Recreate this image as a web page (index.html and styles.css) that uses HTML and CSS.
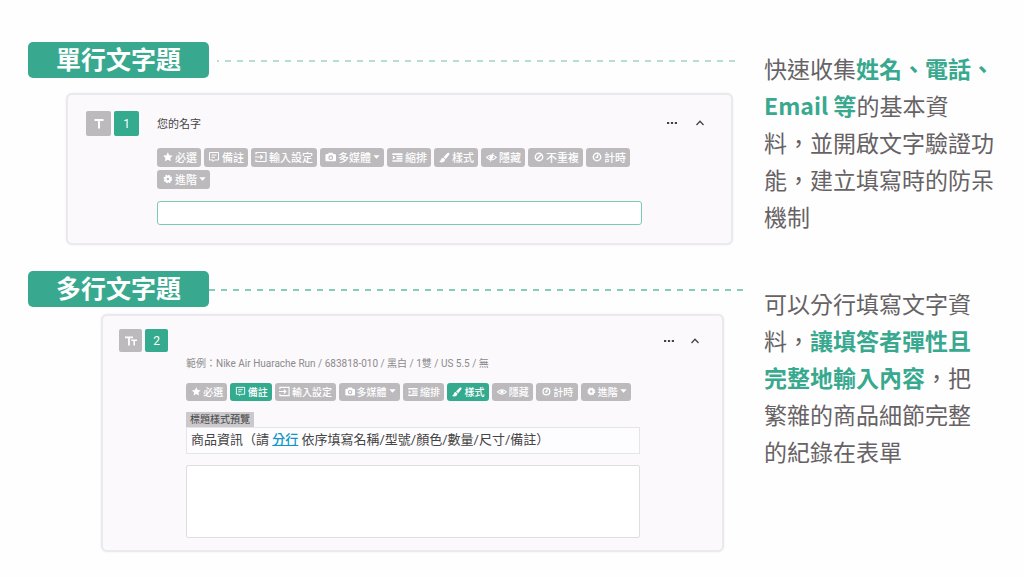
FILE: index.html
```html
<!DOCTYPE html>
<html lang="zh-Hant">
<head>
<meta charset="utf-8">
<meta name="viewport" content="width=device-width, initial-scale=1">
<title>文字題</title>
<link rel="stylesheet" href="styles.css">
</head>
<body>
<svg class="sprite" aria-hidden="true">
  <symbol id="star" viewBox="-2 -1 14 14"><path fill="currentColor" d="M6 .5l1.700 3.500 3.900.5-2.800 2.700.7 3.900L6 9.300 2.500 11.100l.7-3.900L.4 4.500l3.900-.5z"/></symbol>
  <symbol id="note" viewBox="0 0 12 12"><path fill="none" stroke="currentColor" d="M1.500 1.500h9v7.500H6.500L5 10.500V9H1.500zM3.500 4h5M3.500 6.300h3.500"/></symbol>
  <symbol id="enter" viewBox="0 0 12 12"><path fill="none" stroke="currentColor" stroke-width="1.200" d="M1 3.500V1.500h10v9H1V8.500M0 6h7.500M5.300 3.800L7.500 6 5.300 8.200"/></symbol>
  <symbol id="camera" viewBox="-1 0 12.500 12"><path fill="currentColor" fill-rule="evenodd" d="M4 1.500h4l.8 1.500H10q1.500 0 1.500 1.500v5q0 1-1 1h-9q-1 0-1-1v-5Q.5 3 2 3h1.200zM6 4.200a2.500 2.500 0 100 5 2.500 2.500 0 000-5zm0 1.200a1.300 1.300 0 110 2.600 1.300 1.300 0 010-2.600z"/></symbol>
  <symbol id="indent" viewBox="-1 -1 13 13"><path fill="currentColor" d="M.5 1.500h11v1.700H.5zM5 4.200h6.500v1.500H5zM5 6.600h6.500v1.500H5zM.5 9h11v1.700H.5zM1 4l3 2.100-3 2.100z"/></symbol>
  <symbol id="brush" viewBox="-1 -1 13 13"><path fill="currentColor" d="M10 .9q1.800-.3 1.500 1.500L7.500 7.700 5 5.600 9 1.500zM4.500 6.200l2.400 2Q6 11.500 2.500 11.400 1 11.400.3 10.500 2 10 2.300 8.200 2.800 6.300 4.500 6.200z"/></symbol>
  <symbol id="eye" viewBox="-1 -1 13 13"><path fill="none" stroke="currentColor" stroke-width="1.200" d="M.7 6Q6 .6 11.300 6 6 11.400.7 6z"/><circle cx="6" cy="5.800" r="2.100" fill="currentColor"/></symbol>
  <symbol id="eye-off" viewBox="-1 -1 13 13"><path fill="none" stroke="currentColor" stroke-width="1.200" d="M.7 6Q6 .6 11.300 6 6 11.400.7 6zM7.800 1.500L4.500 10.500"/><circle cx="5.700" cy="5.800" r="2" fill="currentColor"/></symbol>
  <symbol id="ban" viewBox="-1 0 12 12"><g fill="none" stroke="currentColor" stroke-width="1.400"><circle cx="6" cy="6" r="3.700"/><path d="M3.500 8.500l5-5"/></g></symbol>
  <symbol id="clock" viewBox="-1 0 12 12"><g fill="none" stroke="currentColor" stroke-width="1.400"><circle cx="6" cy="6" r="3.700"/><path d="M7 3.500L6.300 6.400H4.500"/></g></symbol>
  <symbol id="gear" viewBox="-2 -1 14 14"><circle cx="6" cy="6" r="2.800" fill="none" stroke="currentColor" stroke-width="2.600"/><circle cx="6" cy="6" r="4.300" fill="none" stroke="currentColor" stroke-width="1.500" stroke-dasharray="1.900 1.480"/></symbol>
  <symbol id="caret" viewBox="0 0 7 6"><path fill="currentColor" d="M.3 1.300h6.400L3.500 4.800z"/></symbol>
  <symbol id="dots" viewBox="0 0 12 12"><path fill="currentColor" d="M1 5h2.200v2H1zM4.900 5h2.200v2H4.900zM8.800 5H11v2H8.800z"/></symbol>
  <symbol id="up" viewBox="0 0 12 12"><path fill="none" stroke="currentColor" stroke-width="1.300" d="M2.500 8L6 4.300 9.500 8"/></symbol>
  <symbol id="type-one" viewBox="0 0 12 12"><path fill="currentColor" d="M1.500 1h9v2H7v7.500H5V3H1.500z"/></symbol>
  <symbol id="type-many" viewBox="0 0 12 12"><path fill="currentColor" d="M0 1.500h8v1.700H4.900V10.500H3.100V3.200H0zM6.300 4.500H12v1.500h-2v4.500H8.400V6H6.300z"/></symbol>
</svg>

<main class="page">
  <section class="topic">
    <div class="demo">
      <div class="heading heading-first">
        <h2 class="title">單行文字題</h2>
        <svg class="dashes" aria-hidden="true"><line x1="0" y1="3" x2="100%" y2="3"/></svg>
      </div>
      <article class="card card-single">
        <header class="card-head">
          <span class="badge badge-type"><svg class="type-icon"><use href="#type-one"/></svg></span>
          <span class="badge badge-number">1</span>
          <label class="question" for="answer-name">您的名字</label>
          <button class="plain" type="button" aria-label="更多"><svg class="icon"><use href="#dots"/></svg></button>
          <button class="plain" type="button" aria-label="收合"><svg class="icon"><use href="#up"/></svg></button>
        </header>
        <div class="card-body">
          <div class="toolbar">
            <button class="tool" type="button"><svg class="icon"><use href="#star"/></svg>必選</button>
            <button class="tool" type="button"><svg class="icon"><use href="#note"/></svg>備註</button>
            <button class="tool" type="button"><svg class="icon"><use href="#enter"/></svg>輸入設定</button>
            <button class="tool" type="button"><svg class="icon"><use href="#camera"/></svg>多媒體<svg class="caret"><use href="#caret"/></svg></button>
            <button class="tool" type="button"><svg class="icon"><use href="#indent"/></svg>縮排</button>
            <button class="tool" type="button"><svg class="icon"><use href="#brush"/></svg>樣式</button>
            <button class="tool" type="button"><svg class="icon"><use href="#eye-off"/></svg>隱藏</button>
            <button class="tool" type="button"><svg class="icon"><use href="#ban"/></svg>不重複</button>
            <button class="tool" type="button"><svg class="icon"><use href="#clock"/></svg>計時</button>
            <button class="tool" type="button"><svg class="icon"><use href="#gear"/></svg>進階<svg class="caret"><use href="#caret"/></svg></button>
          </div>
          <input class="answer-line" id="answer-name" type="text">
        </div>
      </article>
    </div>
    <p class="description">快速收集<strong>姓名、電話、<br>Email 等</strong>的基本資<br>料，並開啟文字驗證功<br>能，建立填寫時的防呆<br>機制</p>
  </section>

  <section class="topic">
    <div class="demo">
      <div class="heading">
        <h2 class="title">多行文字題</h2>
        <svg class="dashes" aria-hidden="true"><line x1="0" y1="3" x2="100%" y2="3"/></svg>
      </div>
      <article class="card card-multi">
        <header class="card-head">
          <span class="badge badge-type"><svg class="type-icon"><use href="#type-many"/></svg></span>
          <span class="badge badge-number">2</span>
          <span class="question"></span>
          <button class="plain" type="button" aria-label="更多"><svg class="icon"><use href="#dots"/></svg></button>
          <button class="plain" type="button" aria-label="收合"><svg class="icon"><use href="#up"/></svg></button>
        </header>
        <div class="card-body">
          <p class="example">範例：Nike Air Huarache Run / 683818-010 / 黑白 / 1雙 / US 5.5 / 無</p>
          <div class="toolbar">
            <button class="tool" type="button"><svg class="icon"><use href="#star"/></svg>必選</button>
            <button class="tool tool-active" type="button"><svg class="icon"><use href="#note"/></svg>備註</button>
            <button class="tool" type="button"><svg class="icon"><use href="#enter"/></svg>輸入設定</button>
            <button class="tool" type="button"><svg class="icon"><use href="#camera"/></svg>多媒體<svg class="caret"><use href="#caret"/></svg></button>
            <button class="tool" type="button"><svg class="icon"><use href="#indent"/></svg>縮排</button>
            <button class="tool tool-active" type="button"><svg class="icon"><use href="#brush"/></svg>樣式</button>
            <button class="tool" type="button"><svg class="icon"><use href="#eye"/></svg>隱藏</button>
            <button class="tool" type="button"><svg class="icon"><use href="#clock"/></svg>計時</button>
            <button class="tool" type="button"><svg class="icon"><use href="#gear"/></svg>進階<svg class="caret"><use href="#caret"/></svg></button>
          </div>
          <span class="preview-tag">標題樣式預覽</span>
          <label class="preview" for="answer-goods">商品資訊（請 <span class="preview-link">分行</span> 依序填寫名稱/型號/顏色/數量/尺寸/備註）</label>
          <textarea class="answer-area" id="answer-goods"></textarea>
        </div>
      </article>
    </div>
    <p class="description description-second">可以分行填寫文字資<br>料，<strong>讓填答者彈性且<br>完整地輸入內容</strong>，把<br>繁雜的商品細節完整<br>的紀錄在表單</p>
  </section>
</main>
</body>
</html>
```

FILE: styles.css
```css
* {
  box-sizing: border-box;
}

body {
  margin: 0;
  background: #fefefe;
  color: #444;
  font-family: Roboto, "Noto Sans CJK TC", sans-serif;
}

button,
input,
textarea {
  margin: 0;
  font: inherit;
}

.sprite {
  display: none;
}

.page {
  display: flex;
  flex-direction: column;
  gap: 26px;
  padding: 42px 28px 24px;
}

.topic {
  display: grid;
  grid-template-columns: minmax(0, 1fr) 232px;
  column-gap: 16px;
}

.heading {
  display: flex;
  align-items: center;
}

.heading-first {
  gap: 8px;
  padding-right: 12px;
}

.title {
  flex: none;
  width: 181px;
  margin: 0;
  padding-bottom: 4px;
  border-radius: 5px;
  background: #38a98f;
  color: #fff;
  font: 700 25px/32px "Noto Sans CJK TC", sans-serif;
  text-align: center;
}

.dashes {
  flex: 1;
  width: 0;
  height: 4px;
}

.dashes line {
  stroke: #83cdb9;
  stroke-width: 2;
  stroke-dasharray: 6 6;
}

.heading-first .dashes line {
  stroke-width: 1;
  stroke: #6fbfa9;
  stroke-dashoffset: 4;
}

.card {
  border: 2px solid #ebe9ed;
  border-radius: 6px;
  background: #fbf9fc;
  box-shadow: 0 0 2px #ebe9ed;
}

.card-single {
  margin: 15px 15px 0 38px;
  padding: 16px 21px 18px 18px;
}

.card-multi {
  margin: 7px 24px 0 73px;
  padding: 13px 17px 12px 16px;
}

.card-head {
  display: flex;
  align-items: center;
  gap: 3px;
}

.badge {
  display: flex;
  align-items: center;
  justify-content: center;
  width: 25px;
  height: 25px;
  border-radius: 2px;
  color: #fff;
  font-size: 12px;
}

.card-multi .badge {
  width: 23px;
  height: 23px;
}

.badge-type {
  background: #bcbabd;
}

.badge-number {
  background: #34aa8f;
}

.type-icon {
  width: 12px;
  height: 12px;
}

.question {
  flex: 1;
  padding: 0 0 2px 15px;
  font-size: 11px;
}

.plain {
  display: flex;
  padding: 0;
  border: 0;
  background: none;
  color: #444;
}

.card-single .plain {
  padding-bottom: 2px;
}

.plain + .plain {
  margin: 0 4px 0 13px;
}

.card-multi .plain + .plain {
  margin-left: 11px;
}

.icon {
  flex: none;
  width: 12px;
  height: 12px;
}

.card-single .card-body {
  margin: 12px 68px 0 71px;
}

.card-multi .card-body {
  margin: 4px 65px 0 67px;
}

.toolbar {
  display: flex;
  flex-wrap: wrap;
  gap: 3px;
}

.card-multi .toolbar {
  flex-wrap: nowrap;
  padding-right: 9px;
}

.tool {
  display: flex;
  align-items: center;
  justify-content: center;
  gap: 2px;
  height: 19px;
  padding: 0 4px 2px;
  border: 0;
  border-radius: 3px;
  background: #bcbabd;
  color: #fff;
  font-size: 11px;
  font-weight: 500;
  white-space: nowrap;
}

.card-multi .tool {
  flex: 1 0 auto;
  height: 18px;
  font-size: 10px;
}

.card-multi .tool .icon {
  width: 11px;
  height: 11px;
}

.card .tool-active {
  background: #34aa8f;
}

.caret {
  width: 7px;
  height: 6px;
}

.answer-line,
.answer-area {
  display: block;
  width: 100%;
  background: #fff;
}

.answer-line {
  height: 24px;
  margin-top: 12px;
  padding: 0 6px;
  border: 1px solid #7bcab7;
  border-radius: 3px;
}

.example {
  margin: 0 0 11px;
  color: #8c8a8d;
  font-size: 10px;
  line-height: 16px;
}

.preview-tag {
  display: block;
  width: fit-content;
  margin-top: 11px;
  padding: 0 4px;
  background: #cbc9cc;
  font-size: 10px;
  line-height: 15px;
}

.preview {
  display: block;
  padding: 0 4px 2px;
  border: 1px solid #e6e4e8;
  background: #fdfcfe;
  font-size: 13px;
  line-height: 23px;
  white-space: nowrap;
}

.preview-link {
  color: #0f96c6;
  font-weight: 500;
  text-decoration: underline;
}

.answer-area {
  height: 73px;
  margin-top: 11px;
  border: 1px solid #e0dee2;
  border-radius: 2px;
  resize: none;
}

.description {
  margin: 8px 0 0;
  color: #666265;
  font: 400 23px/37px "Noto Sans CJK TC", sans-serif;
  white-space: nowrap;
}

.description-second {
  margin-top: 14px;
}

.description strong {
  color: #38a98f;
  font-weight: 700;
}
```
